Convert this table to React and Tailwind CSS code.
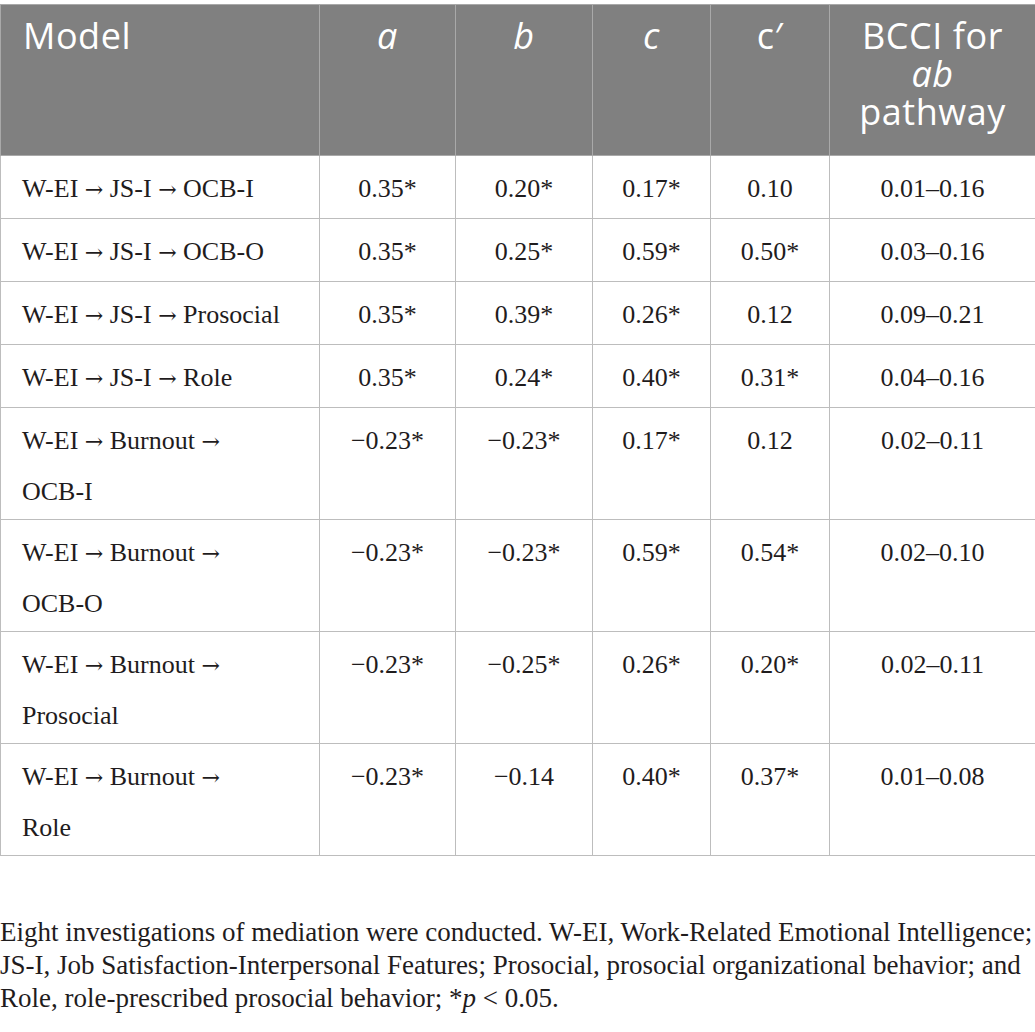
import React from 'react';

const rows = [
    { model: ['W-EI → JS-I → OCB-I'], a: '0.35*', b: '0.20*', c: '0.17*', cp: '0.10', ci: '0.01–0.16' },
    { model: ['W-EI → JS-I → OCB-O'], a: '0.35*', b: '0.25*', c: '0.59*', cp: '0.50*', ci: '0.03–0.16' },
    { model: ['W-EI → JS-I → Prosocial'], a: '0.35*', b: '0.39*', c: '0.26*', cp: '0.12', ci: '0.09–0.21' },
    { model: ['W-EI → JS-I → Role'], a: '0.35*', b: '0.24*', c: '0.40*', cp: '0.31*', ci: '0.04–0.16' },
    { model: ['W-EI → Burnout →', 'OCB-I'], a: '−0.23*', b: '−0.23*', c: '0.17*', cp: '0.12', ci: '0.02–0.11' },
    { model: ['W-EI → Burnout →', 'OCB-O'], a: '−0.23*', b: '−0.23*', c: '0.59*', cp: '0.54*', ci: '0.02–0.10' },
    { model: ['W-EI → Burnout →', 'Prosocial'], a: '−0.23*', b: '−0.25*', c: '0.26*', cp: '0.20*', ci: '0.02–0.11' },
    { model: ['W-EI → Burnout →', 'Role'], a: '−0.23*', b: '−0.14', c: '0.40*', cp: '0.37*', ci: '0.01–0.08' },
];

// arrows in Liberation Serif come out tiny, so draw them with DejaVu
const withArrows = (line) =>
    line.split('→').map((part, i, arr) => (
        <React.Fragment key={i}>
            {part}
            {i < arr.length - 1 && (
                <span className="text-[22px]" style={{ fontFamily: '"DejaVu Serif", serif' }}>→</span>
            )}
        </React.Fragment>
    ));

const HeadCell = ({ children, left }) => (
    <th
        className={`border border-[#a9a9a9] align-top pt-[12px] pb-[24px] font-normal ${left ? 'text-left pl-[22px]' : 'text-center px-1'}`}
    >
        {children}
    </th>
);

const App = () => {
    return (
        <div className="w-[1035px] bg-white pt-1 text-[#1f1c1d]">
            <table
                className="w-[1035px] border-collapse table-fixed"
                style={{ fontFamily: '"Liberation Serif", "Times New Roman", serif' }}
            >
                <colgroup>
                    <col className="w-[319px]" />
                    <col className="w-[136px]" />
                    <col className="w-[137px]" />
                    <col className="w-[118px]" />
                    <col className="w-[119px]" />
                    <col className="w-[206px]" />
                </colgroup>
                <thead
                    className="bg-[#808080] text-white text-[36px] leading-[38px] tracking-[0.015em]"
                    style={{ fontFamily: '"Open Sans", "Noto Sans", sans-serif' }}
                >
                    <tr>
                        <HeadCell left>Model</HeadCell>
                        <HeadCell><i>a</i></HeadCell>
                        <HeadCell><i>b</i></HeadCell>
                        <HeadCell><i>c</i></HeadCell>
                        <HeadCell>c′</HeadCell>
                        <HeadCell>
                            BCCI for<br /><i>ab</i><br />pathway
                        </HeadCell>
                    </tr>
                </thead>
                <tbody className="text-[26px] leading-[50px]">
                    {rows.map((r, i) => {
                        const pad = r.model.length > 1 ? 'pt-[8px] pb-[2px]' : 'pt-[8px] pb-[3px]';
                        return (
                            <tr key={i}>
                                <td className={`border border-[#bdbdbd] align-top pl-[21px] pr-1 whitespace-nowrap ${pad}`}>
                                    {r.model.map((line, j) => (
                                        <div key={j}>{withArrows(line)}</div>
                                    ))}
                                </td>
                                {[r.a, r.b, r.c, r.cp, r.ci].map((v, j) => (
                                    <td key={j} className={`border border-[#bdbdbd] align-top text-center ${pad}`}>
                                        {v}
                                    </td>
                                ))}
                            </tr>
                        );
                    })}
                </tbody>
            </table>
            <p
                className="mt-[60px] text-[27px] leading-[33px] whitespace-nowrap"
                style={{ fontFamily: '"Liberation Serif", "Times New Roman", serif' }}
            >
                Eight investigations of mediation were conducted. W-EI, Work-Related Emotional Intelligence;<br />
                JS-I, Job Satisfaction-Interpersonal Features; Prosocial, prosocial organizational behavior; and<br />
                Role, role-prescribed prosocial behavior; *<i>p</i> &lt; 0.05.
            </p>
        </div>
    );
};

export default App;
